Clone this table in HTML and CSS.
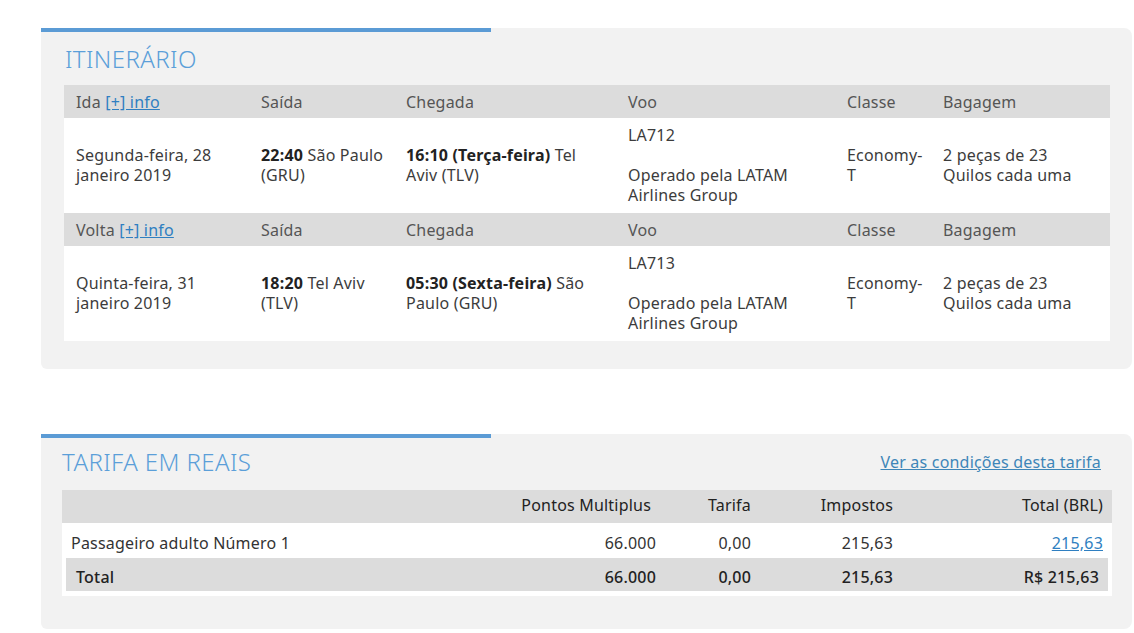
FILE: index.html
```html
<!DOCTYPE html>
<html lang="pt-BR">
<head>
<meta charset="utf-8">
<title>Itinerário</title>
<link rel="stylesheet" href="styles.css">
</head>
<body>
<section class="card card-itinerary">
  <div class="accent"></div>
  <h2 class="card-title">ITINERÁRIO</h2>
  <div class="itin">
    <div class="itin-row itin-head">
      <div class="cell">Ida <a href="#" class="link">[+] info</a></div>
      <div class="cell">Saída</div>
      <div class="cell">Chegada</div>
      <div class="cell">Voo</div>
      <div class="cell">Classe</div>
      <div class="cell">Bagagem</div>
    </div>
    <div class="itin-row itin-data">
      <div class="cell">Segunda-feira, 28 janeiro 2019</div>
      <div class="cell"><b>22:40</b> São Paulo (GRU)</div>
      <div class="cell"><b>16:10 (Terça-feira)</b> Tel Aviv (TLV)</div>
      <div class="cell">LA712<br><br>Operado pela LATAM Airlines Group</div>
      <div class="cell">Economy-T</div>
      <div class="cell">2 peças de 23 Quilos cada uma</div>
    </div>
    <div class="itin-row itin-head">
      <div class="cell">Volta <a href="#" class="link">[+] info</a></div>
      <div class="cell">Saída</div>
      <div class="cell">Chegada</div>
      <div class="cell">Voo</div>
      <div class="cell">Classe</div>
      <div class="cell">Bagagem</div>
    </div>
    <div class="itin-row itin-data">
      <div class="cell">Quinta-feira, 31 janeiro 2019</div>
      <div class="cell"><b>18:20</b> Tel Aviv (TLV)</div>
      <div class="cell"><b>05:30 (Sexta-feira)</b> São Paulo (GRU)</div>
      <div class="cell">LA713<br><br>Operado pela LATAM Airlines Group</div>
      <div class="cell">Economy-T</div>
      <div class="cell">2 peças de 23 Quilos cada uma</div>
    </div>
  </div>
</section>

<section class="card card-fare">
  <div class="accent"></div>
  <div class="fare-top">
    <h2 class="card-title">TARIFA EM REAIS</h2>
    <a href="#" class="link cond-link">Ver as condições desta tarifa</a>
  </div>
  <div class="fare">
    <div class="fare-row fare-head">
      <div class="fc"></div>
      <div class="fc num pts-head">Pontos Multiplus</div>
      <div class="fc num">Tarifa</div>
      <div class="fc num">Impostos</div>
      <div class="fc num last">Total (BRL)</div>
    </div>
    <div class="fare-row fare-data">
      <div class="fc">Passageiro adulto Número 1</div>
      <div class="fc num">66.000</div>
      <div class="fc num">0,00</div>
      <div class="fc num">215,63</div>
      <div class="fc num last"><a href="#" class="link">215,63</a></div>
    </div>
    <div class="fare-row fare-total">
      <div class="fc">Total</div>
      <div class="fc num">66.000</div>
      <div class="fc num">0,00</div>
      <div class="fc num">215,63</div>
      <div class="fc num last">R$ 215,63</div>
    </div>
  </div>
</section>
</body>
</html>
```

FILE: styles.css
```css
html, body {
  margin: 0;
  padding: 0;
  background: #ffffff;
}
body {
  font-family: "Noto Sans", "Liberation Sans", sans-serif;
  font-size: 16px;
  letter-spacing: 0.2px;
  line-height: 20px;
  color: #3c3c3c;
  padding: 28px 0 0 41px;
}
.card {
  width: 1091px;
  box-sizing: border-box;
  background: #f2f2f2;
  border-radius: 0 8px 8px 6px;
}
.accent {
  width: 450px;
  height: 4px;
  background: #5b9bd5;
}
.card-itinerary {
  padding: 0 22px 28px 23px;
}
.card-itinerary .accent {
  margin-left: -23px;
}
.card-title {
  margin: 0;
  font-weight: 300;
  color: #5b9fd9;
  font-size: 24px;
  letter-spacing: 0.4px;
  line-height: 26px;
}
.card-itinerary .card-title {
  padding: 14px 0 13px 1px;
}
.link {
  color: #2f7fc1;
  text-decoration: underline;
}
.itin-row {
  display: grid;
  grid-template-columns: 185px 145px 222px 219px 96px 179px;
}
.itin-head {
  background: #dcdcdc;
  color: #555555;
  height: 33px;
  align-items: center;
}
.itin-data {
  background: #ffffff;
  align-items: center;
  padding: 7px 0 8px;
}
.cell {
  padding: 0 4px 0 12px;
}
.itin-data .cell:nth-child(3),
.itin-data .cell:nth-child(6) {
  padding-right: 20px;
}
.itin-data b {
  font-weight: 700;
  color: #222222;
}

.card-fare {
  margin-top: 65px;
  padding: 0 20px 33px 21px;
}
.card-fare .accent {
  margin-left: -21px;
}
.fare-top {
  display: flex;
  justify-content: space-between;
  align-items: center;
  padding: 11px 11px 15px 0;
}
.cond-link {
  color: #3e86b8;
  font-size: 16px;
}
.fare {
  background: #ffffff;
  padding-bottom: 5px;
}
.fare-row {
  display: grid;
  grid-template-columns: 404px 190px 95px 142px 219px;
  align-items: center;
  box-sizing: border-box;
}
.fc.num {
  text-align: right;
}
.fc.last {
  padding-right: 9px;
}
.fare-head {
  background: #dcdcdc;
  color: #222222;
  height: 33px;
  padding-bottom: 4px;
}
.fare-head .pts-head {
  padding-right: 5px;
}
.fare-data {
  height: 35px;
  padding-top: 4px;
  color: #333333;
}
.fare-data .fc:first-child {
  padding-left: 9px;
}
.fare-total {
  background: #dcdcdc;
  color: #222222;
  font-weight: 500;
  height: 33px;
  padding-top: 4px;
  margin: 0 4px;
  grid-template-columns: 400px 190px 95px 142px 215px;
}
.fare-total .fc:first-child {
  padding-left: 10px;
}
```
